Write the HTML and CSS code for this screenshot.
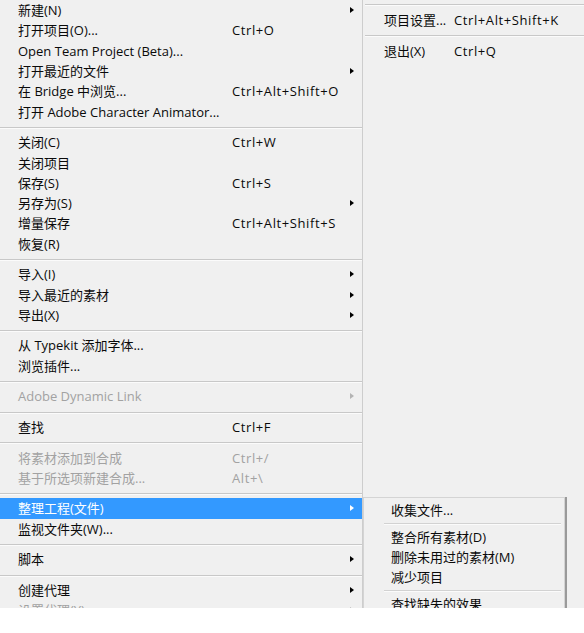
FILE: index.html
```html
<!DOCTYPE html>
<html lang="zh-CN">
<head>
<meta charset="utf-8">
<title>文件菜单</title>
<link rel="stylesheet" href="styles.css">
</head>
<body>
<div class="screen">
  <div class="menu main">
    <div class="item"><span class="label">新建(N)</span><span class="key"></span><span class="arrow"></span></div>
    <div class="item"><span class="label">打开项目(O)...</span><span class="key">Ctrl+O</span><span></span></div>
    <div class="item"><span class="label">Open Team Project (Beta)...</span><span class="key"></span><span></span></div>
    <div class="item"><span class="label">打开最近的文件</span><span class="key"></span><span class="arrow"></span></div>
    <div class="item"><span class="label">在 Bridge 中浏览...</span><span class="key">Ctrl+Alt+Shift+O</span><span></span></div>
    <div class="item"><span class="label">打开 Adobe Character Animator...</span><span class="key"></span><span></span></div>
    <div class="sep"></div>
    <div class="item"><span class="label">关闭(C)</span><span class="key">Ctrl+W</span><span></span></div>
    <div class="item"><span class="label">关闭项目</span><span class="key"></span><span></span></div>
    <div class="item"><span class="label">保存(S)</span><span class="key">Ctrl+S</span><span></span></div>
    <div class="item"><span class="label">另存为(S)</span><span class="key"></span><span class="arrow"></span></div>
    <div class="item"><span class="label">增量保存</span><span class="key">Ctrl+Alt+Shift+S</span><span></span></div>
    <div class="item"><span class="label">恢复(R)</span><span class="key"></span><span></span></div>
    <div class="sep"></div>
    <div class="item"><span class="label">导入(I)</span><span class="key"></span><span class="arrow"></span></div>
    <div class="item"><span class="label">导入最近的素材</span><span class="key"></span><span class="arrow"></span></div>
    <div class="item"><span class="label">导出(X)</span><span class="key"></span><span class="arrow"></span></div>
    <div class="sep"></div>
    <div class="item"><span class="label">从 Typekit 添加字体...</span><span class="key"></span><span></span></div>
    <div class="item"><span class="label">浏览插件...</span><span class="key"></span><span></span></div>
    <div class="sep"></div>
    <div class="item disabled"><span class="label">Adobe Dynamic Link</span><span class="key"></span><span class="arrow"></span></div>
    <div class="sep"></div>
    <div class="item"><span class="label">查找</span><span class="key">Ctrl+F</span><span></span></div>
    <div class="sep"></div>
    <div class="item disabled"><span class="label">将素材添加到合成</span><span class="key">Ctrl+/</span><span></span></div>
    <div class="item disabled"><span class="label">基于所选项新建合成...</span><span class="key">Alt+\</span><span></span></div>
    <div class="sep"></div>
    <div class="item active"><span class="label">整理工程(文件)</span><span class="key"></span><span class="arrow"></span></div>
    <div class="item"><span class="label">监视文件夹(W)...</span><span class="key"></span><span></span></div>
    <div class="sep"></div>
    <div class="item"><span class="label">脚本</span><span class="key"></span><span class="arrow"></span></div>
    <div class="sep"></div>
    <div class="item"><span class="label">创建代理</span><span class="key"></span><span class="arrow"></span></div>
    <div class="item disabled"><span class="label">设置代理(Y)</span><span class="key"></span><span class="arrow"></span></div>
  </div>
  <div class="menu side">
    <div class="sep top"></div>
    <div class="item"><span class="label">项目设置...</span><span class="key">Ctrl+Alt+Shift+K</span></div>
    <div class="sep"></div>
    <div class="item"><span class="label">退出(X)</span><span class="key">Ctrl+Q</span></div>
  </div>
  <div class="menu popup">
    <div class="item"><span class="label">收集文件...</span></div>
    <div class="sep"></div>
    <div class="item"><span class="label">整合所有素材(D)</span></div>
    <div class="item"><span class="label">删除未用过的素材(M)</span></div>
    <div class="item"><span class="label">减少项目</span></div>
    <div class="sep"></div>
    <div class="item"><span class="label">查找缺失的效果</span></div>
  </div>
</div>
</body>
</html>
```

FILE: styles.css
```css
html, body {
  margin: 0;
  padding: 0;
  background: #ffffff;
}

body {
  font-family: "Open Sans", "Noto Sans CJK SC", sans-serif;
  font-size: 13px;
  color: #0a0a0a;
}

.screen {
  position: relative;
  height: 608px;
  overflow: hidden;
  display: flex;
  background: #f0f0f0;
}

.menu {
  background: #f0f0f0;
}

.main {
  width: 362px;
  flex: none;
  border-right: 1px solid #cdcdcd;
}

.main .item {
  display: grid;
  grid-template-columns: 214px 1fr 12px;
  align-items: center;
  height: 20.3px;
  padding: 0 8px 0 18px;
  white-space: nowrap;
}

.item .label,
.item .key {
  line-height: 20px;
}

.item .key {
  letter-spacing: 0.6px;
}

.arrow {
  justify-self: end;
  width: 0;
  height: 0;
  border-top: 3.5px solid transparent;
  border-bottom: 3.5px solid transparent;
  border-left: 4px solid #000000;
}

.sep {
  height: 1px;
  background: #c8c8c8;
  border-bottom: 1px solid #fbfbfb;
  margin: 5px 0 3.3px;
}

.disabled {
  color: #a2a2a2;
}

.disabled .arrow {
  border-left-color: #b4b4b4;
}

.active {
  background: #3399ff;
  color: #ffffff;
}

.active .arrow {
  border-left-color: #ffffff;
}

.side {
  flex: 1;
  padding-left: 2px;
}

.side .sep.top {
  margin: 4px 0 4px;
}

.side .sep {
  margin: 4.5px 0 4px;
}

.side .item {
  display: grid;
  grid-template-columns: 70px 1fr;
  align-items: center;
  height: 20.3px;
  padding-left: 19px;
  white-space: nowrap;
}

.popup {
  position: absolute;
  left: 363px;
  top: 497px;
  width: 200px;
  padding-top: 2px;
  border: 1px solid #d4d4d4;
  box-shadow: 2px 0 0 #9a9a9a;
}

.popup .item {
  height: 20px;
  display: flex;
  align-items: center;
  padding-left: 27px;
  white-space: nowrap;
}

.popup .sep {
  margin: 2.5px 3px 2.5px 20px;
  background: #d2d2d2;
}
```
